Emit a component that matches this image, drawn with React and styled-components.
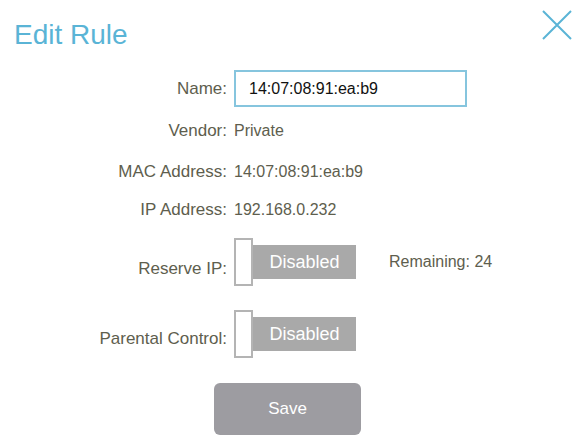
import React from "react";
import styled, { createGlobalStyle } from "styled-components";

const GlobalStyle = createGlobalStyle`
  body {
    margin: 0;
    background: #fff;
    font-family: "Liberation Sans", Arial, sans-serif;
  }
`;

const Page = styled.div`
  width: 575px;
  height: 438px;
  position: relative;
  overflow: hidden;
  background: #fff;
`;

const Header = styled.div`
  display: flex;
  justify-content: space-between;
  align-items: flex-start;
  padding: 0 3px 0 14px;
  height: 70px;
`;

const Title = styled.h1`
  margin: 18px 0 0;
  font-size: 28px;
  font-weight: normal;
  color: #5ab4d6;
  line-height: 34px;
`;

const Close = styled.button`
  all: unset;
  margin-top: 10px;
  width: 30px;
  height: 30px;
  cursor: pointer;
`;

const Form = styled.div`
  display: flex;
  flex-direction: column;
`;

const Row = styled.div`
  display: grid;
  grid-template-columns: 227px auto;
  column-gap: 7px;
  align-items: ${p => (p.$bottom ? "end" : "center")};
  margin-top: ${p => p.$top || 0}px;
`;

const Label = styled.div`
  text-align: right;
  font-size: 17px;
  line-height: 20px;
  color: #5e5e4e;
  padding-bottom: ${p => p.$pad || 0}px;
`;

const Value = styled.div`
  font-size: 16px;
  line-height: 20px;
  color: #5e5e4e;
`;

const Input = styled.input`
  box-sizing: border-box;
  width: 233px;
  height: 37px;
  border: 2px solid #86c5de;
  padding: 0 13px;
  font-family: inherit;
  font-size: 16px;
  color: #111;
  outline: none;
`;

const ToggleWrap = styled.div`
  display: flex;
  align-items: center;
`;

const Knob = styled.div`
  box-sizing: border-box;
  width: 19px;
  height: 48px;
  border: 2px solid #b4b4b4;
  background: #fff;
`;

const Bar = styled.div`
  width: 103px;
  height: 34px;
  background: #a9a9a9;
  color: #fff;
  font-size: 18px;
  display: flex;
  align-items: center;
  justify-content: center;
`;

const Remaining = styled.span`
  margin-left: 33px;
  font-size: 16px;
  color: #5e5e4e;
`;

const SaveButton = styled.button`
  all: unset;
  align-self: center;
  margin: 25px 0 0 0;
  width: 147px;
  height: 52px;
  border-radius: 6px;
  background: #9d9ca1;
  color: #fff;
  font-size: 17px;
  text-align: center;
  line-height: 52px;
  cursor: pointer;
`;

const Toggle = ({ label }) => (
  <ToggleWrap>
    <Knob />
    <Bar>{label}</Bar>
  </ToggleWrap>
);

export default function App() {
  return (
    <Page>
      <GlobalStyle />
      <Header>
        <Title>Edit Rule</Title>
        <Close aria-label="Close">
          <svg width="30" height="30" viewBox="0 0 30 30">
            <path
              d="M1 1 L29 29 M29 1 L1 29"
              stroke="#5ab4d6"
              strokeWidth="2"
              fill="none"
            />
          </svg>
        </Close>
      </Header>
      <Form>
        <Row>
          <Label>Name:</Label>
          <Input defaultValue="14:07:08:91:ea:b9" />
        </Row>
        <Row $top={14}>
          <Label>Vendor:</Label>
          <Value>Private</Value>
        </Row>
        <Row $top={21}>
          <Label>MAC Address:</Label>
          <Value>14:07:08:91:ea:b9</Value>
        </Row>
        <Row $top={18}>
          <Label>IP Address:</Label>
          <Value>192.168.0.232</Value>
        </Row>
        <Row $top={18} $bottom>
          <Label $pad={7}>Reserve IP:</Label>
          <ToggleWrap>
            <Toggle label="Disabled" />
            <Remaining>Remaining: 24</Remaining>
          </ToggleWrap>
        </Row>
        <Row $top={24} $bottom>
          <Label $pad={9}>Parental Control:</Label>
          <Toggle label="Disabled" />
        </Row>
        <SaveButton>Save</SaveButton>
      </Form>
    </Page>
  );
}
